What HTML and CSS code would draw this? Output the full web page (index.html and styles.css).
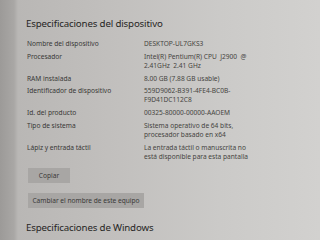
FILE: index.html
```html
<!DOCTYPE html>
<html lang="es">
<head>
<meta charset="utf-8">
<link rel="stylesheet" href="styles.css">
</head>
<body>
<div class="page">
  <h1 class="title">Especificaciones del dispositivo</h1>
  <div class="specs">
    <div class="label">Nombre del dispositivo</div>
    <div class="value">DESKTOP-UL7GKS3</div>
    <div class="label">Procesador</div>
    <div class="value">Intel(R) Pentium(R) CPU &nbsp;J2900 &nbsp;@<br>2.41GHz &nbsp;2.41 GHz</div>
    <div class="label">RAM instalada</div>
    <div class="value">8.00 GB (7.88 GB usable)</div>
    <div class="label">Identificador de dispositivo</div>
    <div class="value">559D9062-B391-4FE4-BC0B-<br>F9D41DC112C8</div>
    <div class="label">Id. del producto</div>
    <div class="value">00325-80000-00000-AAOEM</div>
    <div class="label">Tipo de sistema</div>
    <div class="value">Sistema operativo de 64 bits,<br>procesador basado en x64</div>
    <div class="label">Lápiz y entrada táctil</div>
    <div class="value">La entrada táctil o manuscrita no<br>está disponible para esta pantalla</div>
  </div>
  <div class="actions">
    <button class="btn btn-copy">Copiar</button>
    <button class="btn btn-rename">Cambiar el nombre de este equipo</button>
  </div>
  <h2 class="title title-2">Especificaciones de Windows</h2>
</div>
</body>
</html>
```
FILE: styles.css
```css
html, body {
  margin: 0;
  padding: 0;
  width: 320px;
  height: 240px;
  overflow: hidden;
}
body {
  background:
    linear-gradient(90deg, #9c9a98 0px, #a9a7a5 14px, #b9b7b5 18px, #c2c0be 120px, #cbcac8 220px, #d2d1cf 320px);
  font-family: "Noto Sans", "Open Sans", sans-serif;
  color: #383736;
}
.page {
  padding: 17px 0 0 26px;
}
.title {
  margin: 0;
  font-size: 9.7px;
  font-weight: 400;
  line-height: 14px;
  color: #262524;
  letter-spacing: -0.15px;
}
.specs {
  margin-top: 8px;
  margin-left: 1px;
  display: grid;
  grid-template-columns: 117px auto;
  row-gap: 3.8px;
  font-size: 6.6px;
  line-height: 9px;
}
.value {
  color: #45443f;
}
.actions {
  margin-top: 7px;
  display: flex;
  flex-direction: column;
  align-items: flex-start;
  gap: 10px;
}
.btn {
  border: none;
  background: #a8a6a4;
  font-family: inherit;
  font-size: 6.6px;
  color: #3a3938;
  height: 15px;
  padding: 0;
  margin: 0 0 0 2px;
}
.btn-copy {
  width: 42px;
}
.btn-rename {
  width: 116px;
}
.title-2 {
  margin-top: 13px;
}
```
